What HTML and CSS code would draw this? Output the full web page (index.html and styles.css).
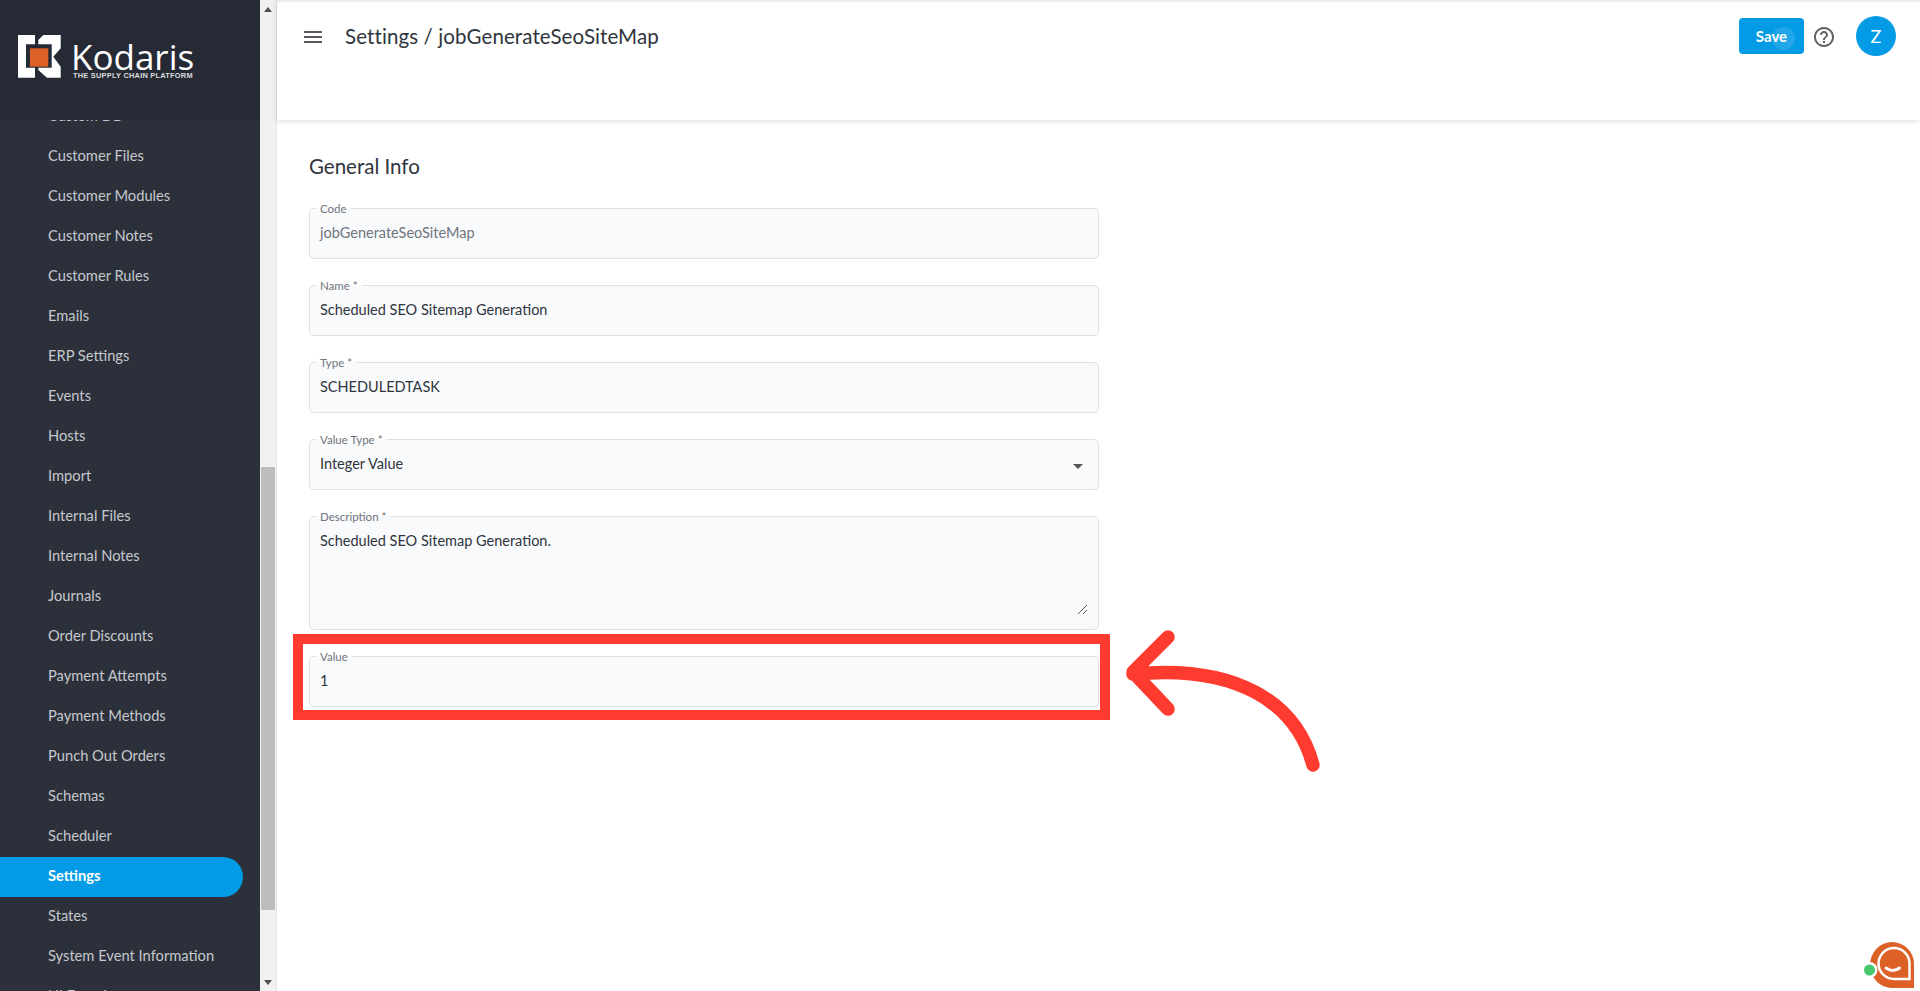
FILE: index.html
```html
<!DOCTYPE html>
<html lang="en">
<head>
<meta charset="utf-8">
<title>Settings / jobGenerateSeoSiteMap</title>
<link rel="stylesheet" href="styles.css">
</head>
<body>
<div class="app">
  <aside class="sidebar">
    <div class="brand">
      <svg class="brand-mark" viewBox="0 0 43 43" width="43" height="43">
        <path fill="#fff" d="M0 0H17V9.300H8V32.700H17V42.700H0Z"/>
        <path fill="#fff" d="M25.300 0H42.700V13.300L35.300 21.700L42.700 31.700V42.700H29L20.300 35V32.700H33.700V9.300H20.300V5Z"/>
        <rect x="12" y="13.300" width="18.300" height="18.400" fill="#dd6127"/>
      </svg>
      <div class="brand-text">
        <span class="brand-name">Kodaris</span>
        <span class="brand-tag">THE SUPPLY CHAIN PLATFORM</span>
      </div>
    </div>
    <nav class="menu">
      <a class="menu-item">Custom DB</a>
      <a class="menu-item">Customer Files</a>
      <a class="menu-item">Customer Modules</a>
      <a class="menu-item">Customer Notes</a>
      <a class="menu-item">Customer Rules</a>
      <a class="menu-item">Emails</a>
      <a class="menu-item">ERP Settings</a>
      <a class="menu-item">Events</a>
      <a class="menu-item">Hosts</a>
      <a class="menu-item">Import</a>
      <a class="menu-item">Internal Files</a>
      <a class="menu-item">Internal Notes</a>
      <a class="menu-item">Journals</a>
      <a class="menu-item">Order Discounts</a>
      <a class="menu-item">Payment Attempts</a>
      <a class="menu-item">Payment Methods</a>
      <a class="menu-item">Punch Out Orders</a>
      <a class="menu-item">Schemas</a>
      <a class="menu-item">Scheduler</a>
      <a class="menu-item active">Settings</a>
      <a class="menu-item">States</a>
      <a class="menu-item">System Event Information</a>
      <a class="menu-item">UI Function</a>
    </nav>
  </aside>
  <div class="scrollbar">
    <span class="arrow-up"></span>
    <div class="track"><div class="thumb"></div></div>
    <span class="arrow-down"></span>
  </div>
  <main class="main">
    <header class="topbar">
      <button class="hamburger" aria-label="Menu"><span></span><span></span><span></span></button>
      <h1 class="title">Settings / jobGenerateSeoSiteMap</h1>
      <div class="actions">
        <button class="save"><span class="ripple"></span><span class="save-label">Save</span></button>
        <svg class="help" viewBox="0 0 24 24" width="24" height="24"><path fill="#5f6368" d="M11 18h2v-2h-2v2zm1-16C6.480 2 2 6.480 2 12s4.480 10 10 10 10-4.480 10-10S17.520 2 12 2zm0 18c-4.410 0-8-3.590-8-8s3.590-8 8-8 8 3.590 8 8-3.590 8-8 8zm0-14c-2.210 0-4 1.790-4 4h2c0-1.100.9-2 2-2s2 .9 2 2c0 2-3 1.750-3 5h2c0-2.250 3-2.500 3-5 0-2.210-1.790-4-4-4z"/></svg>
        <div class="avatar">Z</div>
      </div>
    </header>
    <section class="content">
      <h2 class="section-title">General Info</h2>
      <div class="form">
        <fieldset class="field"><legend>Code</legend><div class="val muted">jobGenerateSeoSiteMap</div></fieldset>
        <fieldset class="field"><legend>Name *</legend><div class="val">Scheduled SEO Sitemap Generation</div></fieldset>
        <fieldset class="field"><legend>Type *</legend><div class="val">SCHEDULEDTASK</div></fieldset>
        <fieldset class="field select"><legend>Value Type *</legend><div class="val">Integer Value</div><span class="caret"></span></fieldset>
        <fieldset class="field area"><legend>Description *</legend><div class="val">Scheduled SEO Sitemap Generation.</div>
          <svg class="grip" viewBox="0 0 9 9" width="9" height="9"><path stroke="#555" stroke-width="1" fill="none" d="M0 9L9 0M5 9L9 5"/></svg>
        </fieldset>
        <fieldset class="field"><legend>Value</legend><div class="val">1</div></fieldset>
      </div>
    </section>
    <div class="highlight"></div>
    <svg class="pointer" viewBox="0 0 200 160" width="200" height="160">
      <path fill="none" stroke="#ff3b2f" stroke-width="13.500" stroke-linecap="round" stroke-linejoin="round" d="M187 133C170 70 110 32 7 42M42 5L7 40L42 77"/>
    </svg>
    <div class="chat">
      <svg viewBox="0 0 60 60" width="60" height="60">
        <path fill="#dd6127" d="M36 14A22 23 0 1 0 36 60H58V36A22 22 0 0 0 36 14Z"/>
        <path fill="none" stroke="#fff" stroke-width="2.500" d="M38 20A15.500 15.500 0 1 0 38 51H53.500V35.500A15.500 15.500 0 0 0 38 20Z"/>
        <path fill="none" stroke="#fff" stroke-width="3" stroke-linecap="round" d="M30 40Q37 45 43.500 40"/>
        <circle cx="13.500" cy="42" r="8" fill="#fff"/>
        <circle cx="13.500" cy="42" r="5.500" fill="#46c96e"/>
      </svg>
    </div>
  </main>
</div>
</body>
</html>
```
FILE: styles.css
```css
* { box-sizing: border-box; }
html, body { margin: 0; height: 100%; overflow: hidden; background: #fff; }
body { font-family: "Lato", "Noto Sans", sans-serif; color: #2b303b; }
.app { display: flex; height: 991px; }

.sidebar { width: 260px; flex: none; background: #2b303b; display: flex; flex-direction: column; overflow: hidden; }
.brand { position: relative; z-index: 2; height: 120px; flex: none; background: #252a35; display: flex; align-items: flex-start; padding: 35px 0 0 18px; gap: 10px; }
.brand-mark { flex: none; }
.brand-text { display: flex; flex-direction: column; color: #fff; }
.brand-name { font-family: "Open Sans", sans-serif; font-size: 35px; line-height: 30px; margin-top: 7px; }
.brand-tag { font-family: "Liberation Sans", sans-serif; font-size: 7.400px; font-weight: 700; line-height: 8px; letter-spacing: 0.25px; margin-left: 2px; white-space: nowrap; color: #dcdcdc; }
.menu { margin-top: -23px; display: flex; flex-direction: column; }
.menu-item { display: flex; align-items: center; height: 40px; flex: none; padding: 0 0 5px 48px; margin-right: 17px; font-size: 14.700px; color: #c6c8cc; border-radius: 0 20px 20px 0; }
.menu-item.active { background: #039be5; color: #fff; font-weight: 700; }

.scrollbar { width: 17px; flex: none; background: #f1f1f1; border-right: 1px solid #e4e4e4; display: flex; flex-direction: column; align-items: center; }
.arrow-up { margin-top: 7px; margin-bottom: 4px; border: 4px solid transparent; border-top: 0; border-bottom: 5px solid #505050; }
.arrow-down { margin-top: 4px; margin-bottom: 6px; border: 4px solid transparent; border-bottom: 0; border-top: 5px solid #505050; }
.track { flex: 1; width: 100%; display: flex; flex-direction: column; justify-content: flex-end; padding-bottom: 66px; }
.thumb { height: 443px; width: 14px; margin-left: 1px; background: #bdbdbd; }

.main { flex: 1; position: relative; min-width: 0; }
.topbar { height: 120px; border-top: 2px solid #ececec; display: flex; align-items: flex-start; padding: 0 24px 0 27px; box-shadow: 0 1px 6px rgba(0,0,0,.14); background: #fff; }
.hamburger { width: 18px; height: 12px; margin-top: 29px; border: 0; padding: 0; background: none; display: flex; flex-direction: column; justify-content: space-between; }
.hamburger span { display: block; height: 2px; background: #555a60; }
.title { margin: 22px 0 0 23px; font-size: 20.500px; font-weight: 400; line-height: 24px; letter-spacing: 0.1px; color: #2f343d; }
.actions { margin-left: auto; display: flex; align-items: flex-start; }
.save { position: relative; margin-top: 16px; width: 65px; height: 36px; border: 0; border-radius: 4px; background: #039be5; color: #fff; font: 700 15px "Lato", sans-serif; padding: 0; }
.ripple { position: absolute; left: 33px; top: 9px; width: 23px; height: 23px; border-radius: 50%; background: rgba(255,255,255,.12); }
.save-label { position: relative; }
.help { margin: 23px 0 0 8px; }
.avatar { margin: 14px 0 0 20px; width: 40px; height: 40px; border-radius: 50%; background: #039be5; color: #fff; font-size: 18px; display: flex; align-items: center; justify-content: center; }

.content { padding: 34px 0 0 32px; }
.section-title { margin: 0; font-size: 20.500px; font-weight: 400; line-height: 24px; color: #2f343d; }
.form { margin-top: 23px; width: 790px; display: flex; flex-direction: column; gap: 19px; }
.field { position: relative; margin: 0; padding: 0 10px; height: 58px; border: 1px solid #e0e0e0; border-radius: 5px; background: #f9fafc; min-width: 0; }
.field legend { padding: 2px 4px 0; margin-left: -4px; font-size: 11.500px; line-height: 12px; color: #70747c; }
.val { font-size: 14.500px; line-height: 20px; margin-top: 8px; color: #2f343d; }
.val.muted { color: #70747c; }
.area { height: 121px; }
.caret { position: absolute; right: 15px; top: 18px; border: 5px solid transparent; border-bottom: 0; border-top: 5px solid #555; }
.grip { position: absolute; right: 11px; top: 82px; }

.highlight { position: absolute; left: 16px; top: 634px; width: 817px; height: 86px; border: 10px solid #ff3b2f; }
.pointer { position: absolute; left: 849px; top: 632px; overflow: visible; }
.chat { position: absolute; right: 4px; bottom: 3px; width: 60px; height: 60px; }
```
